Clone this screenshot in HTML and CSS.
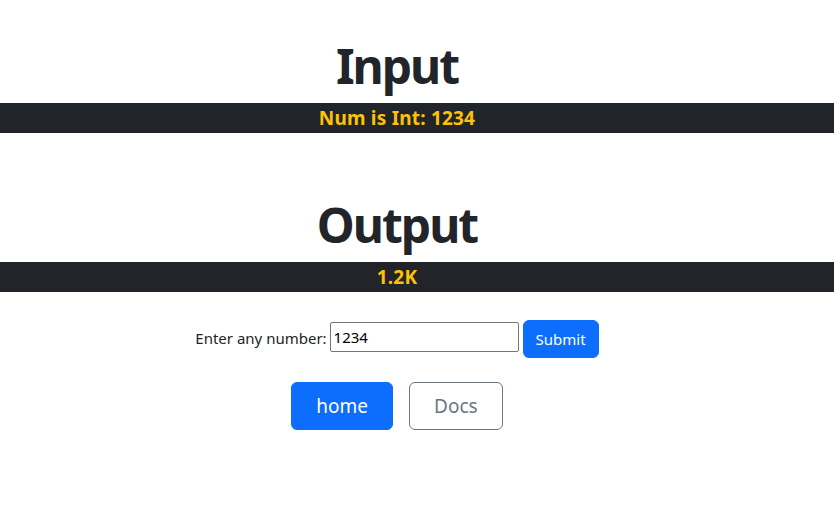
FILE: index.html
```html
<!DOCTYPE html>
<html lang="en">
<head>
<meta charset="utf-8">
<title>Number formatter</title>
<link rel="stylesheet" href="styles.css">
</head>
<body>
  <section class="block block-input">
    <h1 class="title">Input</h1>
    <div class="band"><span class="band-text">Num is Int: 1234</span></div>
  </section>
  <section class="block block-output">
    <h1 class="title">Output</h1>
    <div class="band"><span class="band-text">1.2K</span></div>
  </section>
  <form class="form-row" onsubmit="return false">
    <label class="label" for="num">Enter any number:</label>
    <input class="field" id="num" type="text" value="1234">
    <button class="btn btn-primary" type="submit">Submit</button>
  </form>
  <nav class="links">
    <a class="btn btn-lg btn-primary" href="#">home</a>
    <a class="btn btn-lg btn-outline" href="#">Docs</a>
  </nav>
</body>
</html>
```

FILE: styles.css
```css
* { box-sizing: border-box; }

body {
  margin: 0;
  font-family: "Noto Sans", "Open Sans", sans-serif;
  color: #212529;
  background: #fff;
}

.block-input { padding-top: 37px; }
.block-output { padding-top: 63px; }

.title {
  margin: 0 0 8px;
  padding-right: 40px;
  font-size: 48px;
  line-height: 58px;
  font-weight: 700;
  letter-spacing: -2px;
  text-align: center;
  color: #212529;
}

.band {
  height: 30px;
  background: #212529;
  display: flex;
  align-items: center;
  justify-content: center;
  padding-right: 40px;
}

.band-text {
  color: #ffc107;
  font-size: 19px;
  font-weight: 700;
  line-height: 30px;
  letter-spacing: 0.2px;
}

.form-row {
  display: flex;
  align-items: center;
  justify-content: center;
  gap: 4px;
  margin-top: 28px;
  padding-right: 40px;
}

.label {
  font-size: 15px;
  color: #212529;
  margin-bottom: 2px;
}

.field {
  width: 189px;
  height: 30px;
  margin: 0 0 4px -1px;
  border: 1px solid #767676;
  border-radius: 2px;
  padding: 1px 3px;
  font-family: "Noto Sans", sans-serif;
  font-size: 15px;
  color: #000;
}

.btn {
  display: inline-flex;
  align-items: center;
  justify-content: center;
  border: 1px solid transparent;
  border-radius: 6px;
  text-decoration: none;
  font-family: inherit;
  cursor: pointer;
}

.form-row .btn {
  height: 38px;
  padding: 0 12px;
  font-size: 15px;
}

.btn-primary {
  background: #0d6efd;
  border-color: #0d6efd;
  color: #fff;
}

.btn-outline {
  background: #fff;
  border-color: #6c757d;
  color: #6c757d;
}

.links {
  display: flex;
  justify-content: center;
  gap: 16px;
  margin-top: 24px;
  padding-right: 40px;
}

.btn-lg {
  height: 48px;
  padding: 0 24px;
  font-size: 19px;
}
```
